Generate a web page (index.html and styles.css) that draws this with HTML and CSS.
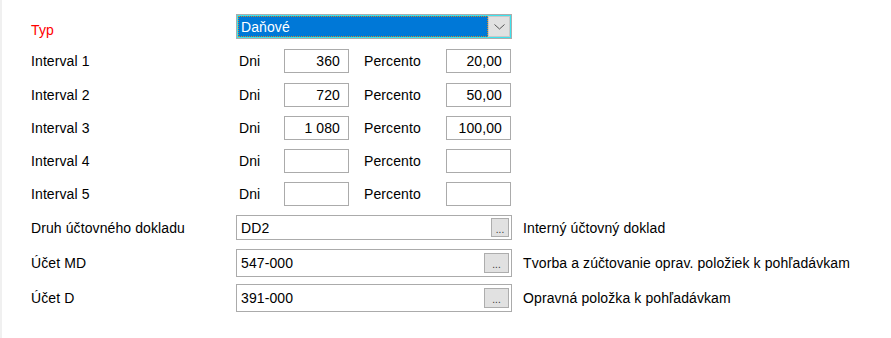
FILE: index.html
```html
<!DOCTYPE html>
<html lang="sk">
<head>
    <meta charset="UTF-8">
    <title>Typ</title>
    <link rel="stylesheet" href="styles.css">
</head>
<body>

<div class="form">
    <!-- Typ -->
    <div class="row row-typ">
        <div class="label label-red">Typ</div>
        <div class="combo">
            <div class="combo-value"><span>Daňové</span></div>
            <div class="combo-btn">
                <svg width="11" height="6" viewBox="0 0 11 6"><path d="M0.5 0.5 L5.5 5 L10.5 0.5" fill="none" stroke="#555" stroke-width="1"/></svg>
            </div>
        </div>
    </div>

    <!-- Intervaly -->
    <div class="row row-interval">
        <div class="label">Interval 1</div>
        <div class="interval">
            <span class="sub-label">Dni</span>
            <div class="box num">360</div>
            <span class="sub-label pct">Percento</span>
            <div class="box num">20,00</div>
        </div>
    </div>
    <div class="row row-interval">
        <div class="label">Interval 2</div>
        <div class="interval">
            <span class="sub-label">Dni</span>
            <div class="box num">720</div>
            <span class="sub-label pct">Percento</span>
            <div class="box num">50,00</div>
        </div>
    </div>
    <div class="row row-interval">
        <div class="label">Interval 3</div>
        <div class="interval">
            <span class="sub-label">Dni</span>
            <div class="box num">1 080</div>
            <span class="sub-label pct">Percento</span>
            <div class="box num">100,00</div>
        </div>
    </div>
    <div class="row row-interval">
        <div class="label">Interval 4</div>
        <div class="interval">
            <span class="sub-label">Dni</span>
            <div class="box num"></div>
            <span class="sub-label pct">Percento</span>
            <div class="box num"></div>
        </div>
    </div>
    <div class="row row-interval">
        <div class="label">Interval 5</div>
        <div class="interval">
            <span class="sub-label">Dni</span>
            <div class="box num"></div>
            <span class="sub-label pct">Percento</span>
            <div class="box num"></div>
        </div>
    </div>

    <!-- Doklad a ucty -->
    <div class="row row-lookup row-doklad">
        <div class="label">Druh účtovného dokladu</div>
        <div class="lookup">
            <div class="box lookup-box">
                <span>DD2</span>
                <div class="dots-btn">...</div>
            </div>
            <span class="lookup-desc">Interný účtovný doklad</span>
        </div>
    </div>
    <div class="row row-lookup row-ucet">
        <div class="label">Účet MD</div>
        <div class="lookup">
            <div class="box lookup-box">
                <span>547-000</span>
                <div class="dots-btn">...</div>
            </div>
            <span class="lookup-desc">Tvorba a zúčtovanie oprav. položiek k pohľadávkam</span>
        </div>
    </div>
    <div class="row row-lookup row-ucet">
        <div class="label">Účet D</div>
        <div class="lookup">
            <div class="box lookup-box">
                <span>391-000</span>
                <div class="dots-btn">...</div>
            </div>
            <span class="lookup-desc">Opravná položka k pohľadávkam</span>
        </div>
    </div>
</div>

</body>
</html>
```

FILE: styles.css
```css
/* Basic Reset */
body {
    margin: 0;
    padding: 0;
    background: #fff;
    font-family: 'Liberation Sans', Arial, sans-serif;
    font-size: 14px;
    letter-spacing: 0.1px;
    color: #000;
}

.form {
    border-left: 2px solid #f0f0f0;
    min-height: 338px;
    box-sizing: border-box;
    padding: 14px 0 0 29px;
}

/* Rows */
.row {
    display: grid;
    grid-template-columns: 205px auto;
    align-items: center;
}

.row-typ {
    height: 25px;
    margin-bottom: 10px;
}

.row-interval {
    height: 24px;
    margin-bottom: 9px;
}
.row-interval:nth-child(2) { margin-bottom: 10px; }

.row-doklad {
    height: 25px;
    margin-bottom: 9px;
}

.row-ucet {
    height: 28px;
    margin-bottom: 7px;
}

.label {
    white-space: nowrap;
}

.label-red {
    color: #f00;
    padding-top: 6px;
}

/* Combobox */
.combo {
    display: flex;
    width: 276px;
    height: 25px;
    box-sizing: border-box;
    border: 1px solid #adadad;
    background: #3de3ee;
    padding: 1px;
}

.combo-value {
    flex: 1;
    background: #0078d7;
    border: 1px dotted #000;
    outline: 1px dotted #d08a2a;
    outline-offset: -1px;
    color: #fff;
    display: flex;
    align-items: center;
    padding-left: 2px;
}

.combo-btn {
    width: 20px;
    background: #e1e1e1;
    border: 1px solid #c8c8c8;
    display: flex;
    align-items: center;
    justify-content: center;
}

/* Interval inputs */
.interval {
    display: flex;
    align-items: center;
    height: 24px;
}

.sub-label {
    width: 45px;
    margin-left: 3px;
}

.sub-label.pct {
    width: 82px;
    margin-left: 15px;
}

.box {
    box-sizing: border-box;
    border: 1px solid #ababab;
    background: #fff;
    height: 100%;
}

.num {
    width: 65px;
    text-align: right;
    padding-right: 8px;
    line-height: 22px;
}

/* Lookup fields */
.lookup {
    display: flex;
    align-items: center;
    height: 100%;
}

.lookup-box {
    width: 276px;
    display: flex;
    align-items: center;
    justify-content: space-between;
    padding: 0 2px 0 4px;
}

.dots-btn {
    box-sizing: border-box;
    width: 25px;
    height: 20px;
    background: #e1e1e1;
    border: 1px solid #adadad;
    font-size: 10px;
    letter-spacing: 0;
    line-height: 22px;
    text-align: center;
    color: #333;
}

.row-doklad .dots-btn {
    width: 18px;
    height: 19px;
}

.lookup-desc {
    margin-left: 11px;
    white-space: nowrap;
}
```
